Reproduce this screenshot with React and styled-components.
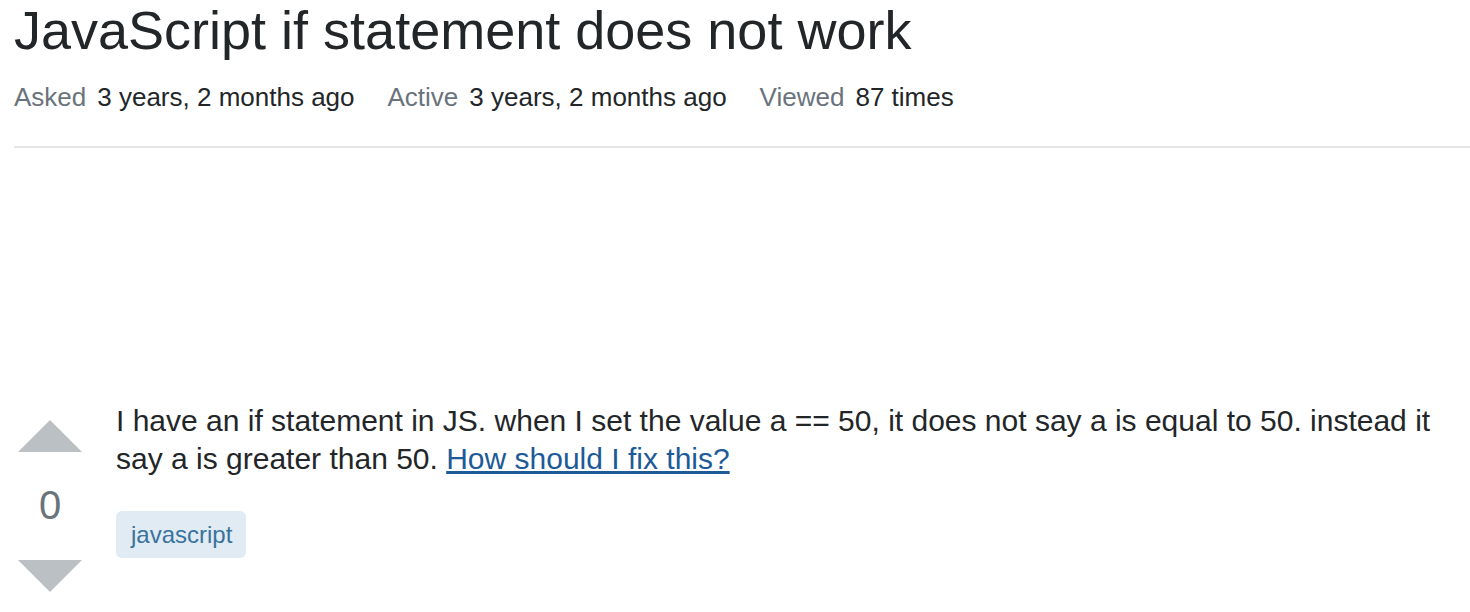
import React from 'react';
import styled, { createGlobalStyle } from 'styled-components';

const GlobalStyle = createGlobalStyle`
  html, body {
    margin: 0;
    padding: 0;
    background: #ffffff;
  }
  body {
    font-family: "Liberation Sans", Arial, Helvetica, sans-serif;
    color: #232629;
  }
`;

const Page = styled.main`
  padding: 0 0 0 14px;
  width: 1456px;
`;

const Title = styled.h1`
  margin: 0;
  font-size: 54px;
  font-weight: normal;
  line-height: 60px;
  color: #232629;
`;

const Meta = styled.div`
  display: flex;
  gap: 33px;
  margin-top: 20px;
  font-size: 26px;
  line-height: 34px;
  padding-bottom: 32px;
  border-bottom: 2px solid #e4e6e8;
`;

const MetaItem = styled.div`
  display: flex;
  gap: 11px;
`;

const MetaLabel = styled.span`
  color: #6a737c;
`;

const MetaValue = styled.span`
  color: #232629;
`;

const Spacer = styled.div`
  height: 254px;
`;

const Post = styled.div`
  display: flex;
  gap: 34px;
`;

const VoteCell = styled.div`
  display: flex;
  flex-direction: column;
  align-items: center;
  width: 64px;
  padding-top: 18px;
  margin-left: 4px;
`;

const VoteButton = styled.button`
  border: 0;
  background: none;
  padding: 0;
  cursor: pointer;
  display: block;
  line-height: 0;
`;

const VoteCount = styled.div`
  font-size: 40px;
  line-height: 40px;
  color: #6a737c;
  margin: 33px 0 35px;
`;

const PostBody = styled.div`
  flex: 1;
  padding-right: 20px;
`;

const Text = styled.p`
  margin: 0;
  font-size: 30px;
  line-height: 38px;
  color: #232629;
`;

const Link = styled.a`
  color: #1d5a98;
  text-decoration: underline;
`;

const Tags = styled.div`
  display: flex;
  gap: 8px;
  margin-top: 33px;
`;

const Tag = styled.a`
  display: inline-block;
  background: #e1ebf4;
  color: #39739d;
  font-size: 24px;
  line-height: 47px;
  height: 47px;
  padding: 0 14px 0 15px;
  border-radius: 6px;
  text-decoration: none;
`;

const Arrow = ({ down }) => (
  <svg width="64" height="32" viewBox="0 0 64 32">
    <path d={down ? 'M0 0h64L32 32z' : 'M0 32h64L32 0z'} fill="#bbc0c4" />
  </svg>
);

export default function App() {
  return (
    <>
      <GlobalStyle />
      <Page>
        <Title>JavaScript if statement does not work</Title>
        <Meta>
          <MetaItem>
            <MetaLabel>Asked</MetaLabel>
            <MetaValue>3 years, 2 months ago</MetaValue>
          </MetaItem>
          <MetaItem>
            <MetaLabel>Active</MetaLabel>
            <MetaValue>3 years, 2 months ago</MetaValue>
          </MetaItem>
          <MetaItem>
            <MetaLabel>Viewed</MetaLabel>
            <MetaValue>87 times</MetaValue>
          </MetaItem>
        </Meta>
        <Spacer />
        <Post>
          <VoteCell>
            <VoteButton aria-label="Up vote">
              <Arrow />
            </VoteButton>
            <VoteCount>0</VoteCount>
            <VoteButton aria-label="Down vote">
              <Arrow down />
            </VoteButton>
          </VoteCell>
          <PostBody>
            <Text>
              I have an if statement in JS. when I set the value a == 50, it does not say a is equal to 50. instead it
              say a is greater than 50. <Link href="#">How should I fix this?</Link>
            </Text>
            <Tags>
              <Tag href="#">javascript</Tag>
            </Tags>
          </PostBody>
        </Post>
      </Page>
    </>
  );
}
